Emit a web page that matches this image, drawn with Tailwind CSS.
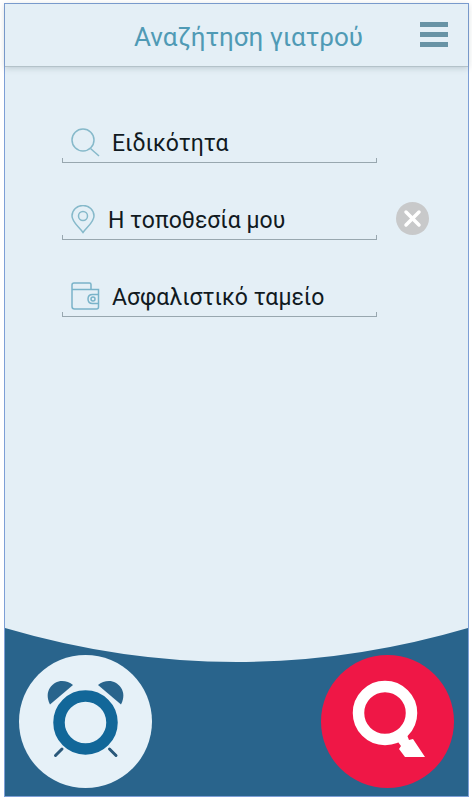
<!DOCTYPE html>
<html lang="el">
<head>
    <meta charset="UTF-8">
    <meta name="viewport" content="width=device-width, initial-scale=1.0">
    <title>Αναζήτηση γιατρού</title>
    <script src="https://cdn.jsdelivr.net/npm/@tailwindcss/browser@4"></script>
</head>
<body class="bg-white font-['Roboto',sans-serif]">
    <div class="min-h-screen py-[3px] pl-1 pr-[3px] flex">
        <div class="flex-1 min-w-0 flex flex-col border border-[#7d9fd6] bg-[#e4eff6]">
            <!-- Header -->
            <header class="grid grid-cols-[1fr_auto_1fr] items-center h-[63px] px-5 border-b border-[#b3c2c9] shadow-[0_1px_6px_rgba(90,110,120,0.3)]">
                <h1 class="col-start-2 text-[26px] leading-8 text-[#4f9ab5] pl-6 pt-1">Αναζήτηση γιατρού</h1>
                <button type="button" aria-label="Μενού" class="justify-self-end">
                    <svg class="w-7 h-[26px]" viewBox="0 0 28 26" fill="#6893a5">
                        <rect width="28" height="5" />
                        <rect y="10" width="28" height="5" />
                        <rect y="20" width="28" height="5" />
                    </svg>
                </button>
            </header>

            <!-- Search form -->
            <main class="flex-1 pt-[53px] pl-[57px] pr-[39px]">
                <form id="searchForm" class="flex flex-col gap-[34px]">
                    <div class="grid grid-cols-[1fr_52px] items-center">
                        <div class="min-w-0">
                            <div class="flex items-end gap-3 h-[38px] pl-2">
                                <label for="specialty" class="w-[30px] shrink-0">
                                    <svg class="w-[30px] h-[30px]" viewBox="0 0 30 30" fill="none" stroke="#86b9ca" stroke-width="1.5">
                                        <circle cx="13" cy="12" r="11" />
                                        <path d="M20.5 20.5L29 28" />
                                    </svg>
                                </label>
                                <input id="specialty" type="text" aria-label="Ειδικότητα" value="Ειδικότητα" class="flex-1 min-w-0 bg-transparent text-[23px] leading-7 text-[#111a1f] outline-none">
                            </div>
                            <div class="h-[5px] border-x border-b border-[#98a7af]"></div>
                        </div>
                    </div>

                    <div class="grid grid-cols-[1fr_52px] items-center">
                        <div class="min-w-0">
                            <div class="flex items-end gap-2 h-[38px] pl-2">
                                <label for="location" class="w-[30px] shrink-0">
                                    <svg class="w-[30px] h-[30px]" viewBox="0 0 30 30" fill="none" stroke="#86b9ca" stroke-width="1.5">
                                        <path d="M13 27.5C9 22 2 17 2 11A11 10.5 0 0 1 24 11C24 17 17 22 13 27.5Z" />
                                        <circle cx="13" cy="11" r="4.5" />
                                    </svg>
                                </label>
                                <input id="location" type="text" aria-label="Τοποθεσία" value="Η τοποθεσία μου" class="flex-1 min-w-0 bg-transparent text-[23px] leading-7 text-[#111a1f] outline-none">
                            </div>
                            <div class="h-[5px] border-x border-b border-[#98a7af]"></div>
                        </div>
                        <button type="button" aria-label="Καθαρισμός" class="justify-self-end">
                            <svg class="w-[33px] h-[33px]" viewBox="0 0 33 33">
                                <circle cx="16.5" cy="16.5" r="16.5" fill="#c8c9ca" />
                                <path d="M10 10L23 23M23 10L10 23" stroke="#fff" stroke-width="3.5" stroke-linecap="round" />
                            </svg>
                        </button>
                    </div>

                    <div class="grid grid-cols-[1fr_52px] items-center">
                        <div class="min-w-0">
                            <div class="flex items-end gap-3 h-[38px] pl-2">
                                <label for="insurance" class="w-[30px] shrink-0">
                                    <svg class="w-[30px] h-[30px]" viewBox="0 0 30 30" fill="none" stroke="#79b3c9" stroke-width="1.5">
                                        <path d="M2 7.5V24.5Q2 27 4.5 27H26.5Q28.5 27 28.5 25V7.5H2V3Q2 1 4 1H19.5Q21 1 21 2.5V7.5" />
                                        <path d="M28.5 12.5H22.5Q18 12.500 18 17Q18 21.5 22.5 21.5H28.5" />
                                        <circle cx="23" cy="17" r="2" />
                                    </svg>
                                </label>
                                <input id="insurance" type="text" aria-label="Ασφαλιστικό ταμείο" value="Ασφαλιστικό ταμείο" class="flex-1 min-w-0 bg-transparent text-[23px] leading-7 text-[#111a1f] outline-none">
                            </div>
                            <div class="h-[5px] border-x border-b border-[#98a7af]"></div>
                        </div>
                    </div>
                </form>
            </main>

            <!-- Bottom bar -->
            <footer class="relative flex justify-between pt-[27px] pb-2 px-[14px]">
                <svg class="absolute inset-0 w-full h-full" viewBox="0 0 463 168" preserveAspectRatio="none" fill="#29648c">
                    <path d="M0 0Q231.5 68 463 0V168H0Z" />
                </svg>
                <button type="button" aria-label="Υπενθυμίσεις" class="relative">
                    <svg class="w-[133px] h-[133px]" viewBox="0 0 133 133">
                        <circle cx="66.5" cy="66.5" r="66.5" fill="#e6f1f8" />
                        <circle cx="66.5" cy="67.5" r="26.5" fill="none" stroke="#126799" stroke-width="11.5" />
                        <path d="M31 49.5C24 36 34 26 43 26C47 26 51 27.5 54 30Z" fill="#29648c" />
                        <path d="M102 49.5C109 36 99 26 90 26C86 26 82 27.5 79 30Z" fill="#29648c" />
                        <path d="M43 94L36.5 100.5M90.5 94L97 100.5" stroke="#29587a" stroke-width="3" stroke-linecap="round" />
                    </svg>
                </button>
                <button type="submit" form="searchForm" aria-label="Αναζήτηση" class="relative">
                    <svg class="w-[133px] h-[133px]" viewBox="0 0 133 133">
                        <circle cx="66.5" cy="66.5" r="66.5" fill="#ef1746" />
                        <circle cx="64" cy="58" r="26.5" fill="none" stroke="#fff" stroke-width="11.5" />
                        <path d="M77 87L86 80L88 85L92 84L104 102H84L78 94L80 91Z" fill="#fff" />
                    </svg>
                </button>
            </footer>
        </div>
    </div>
</body>
</html>
